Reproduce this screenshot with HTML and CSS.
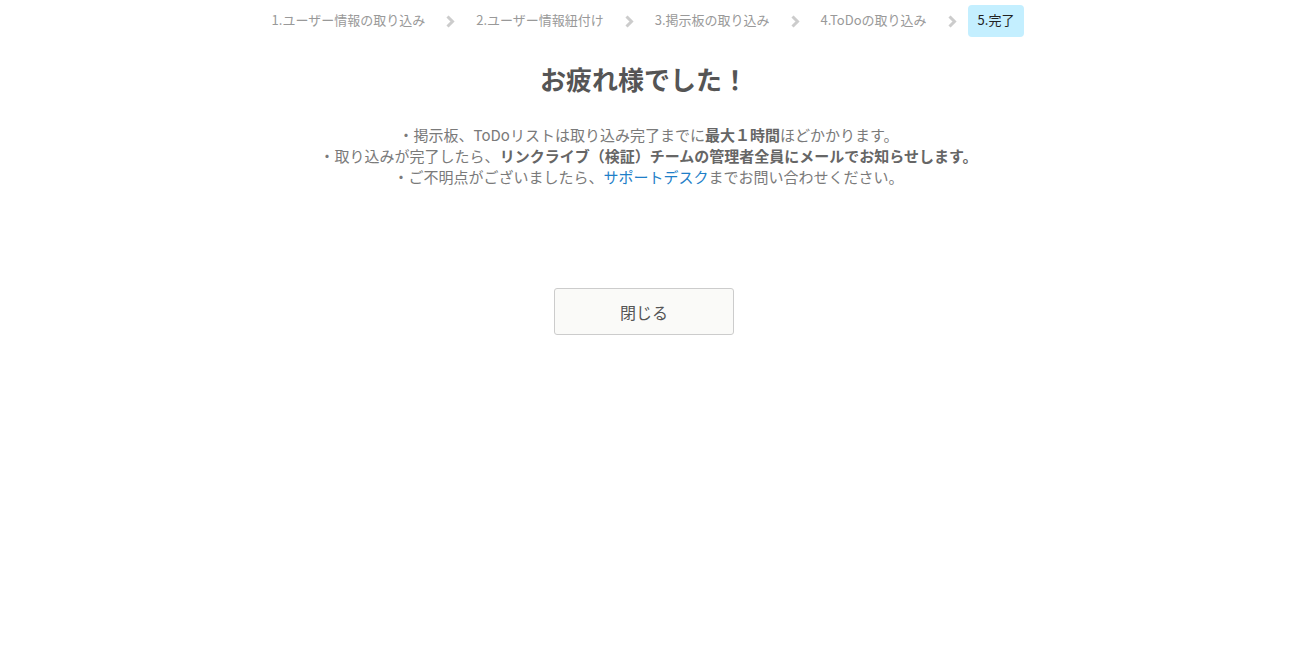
FILE: index.html
```html
<!DOCTYPE html>
<html lang="ja">
<head>
<meta charset="utf-8">
<title>完了</title>
<link rel="stylesheet" href="styles.css">
</head>
<body>
<div class="page">
  <nav class="steps">
    <span class="step">1.ユーザー情報の取り込み</span>
    <span class="sep"><svg width="9" height="13" viewBox="0 0 9 13"><path d="M1.5 1.5 L6.5 6.5 L1.5 11.5" fill="none" stroke="#cccccc" stroke-width="3"/></svg></span>
    <span class="step">2.ユーザー情報紐付け</span>
    <span class="sep"><svg width="9" height="13" viewBox="0 0 9 13"><path d="M1.5 1.5 L6.5 6.5 L1.5 11.5" fill="none" stroke="#cccccc" stroke-width="3"/></svg></span>
    <span class="step">3.掲示板の取り込み</span>
    <span class="sep"><svg width="9" height="13" viewBox="0 0 9 13"><path d="M1.5 1.5 L6.5 6.5 L1.5 11.5" fill="none" stroke="#cccccc" stroke-width="3"/></svg></span>
    <span class="step">4.ToDoの取り込み</span>
    <span class="sep"><svg width="9" height="13" viewBox="0 0 9 13"><path d="M1.5 1.5 L6.5 6.5 L1.5 11.5" fill="none" stroke="#cccccc" stroke-width="3"/></svg></span>
    <span class="step active">5.完了</span>
  </nav>
  <h1 class="title">お疲れ様でした！</h1>
  <div class="message">
    <p>・掲示板、ToDoリストは取り込み完了までに<strong>最大１時間</strong>ほどかかります。</p>
    <p>・取り込みが完了したら、<strong>リンクライブ（検証）チームの管理者全員にメールでお知らせします。</strong></p>
    <p>・ご不明点がございましたら、<a href="#" class="link">サポートデスク</a>までお問い合わせください。</p>
  </div>
  <div class="actions">
    <button class="close-btn" type="button">閉じる</button>
  </div>
</div>
</body>
</html>
```

FILE: styles.css
```css
html, body {
  margin: 0;
  padding: 0;
  background: #ffffff;
}
body {
  font-family: "Noto Sans CJK JP", "Noto Sans", sans-serif;
  color: #777777;
}
.page {
  display: flex;
  flex-direction: column;
  align-items: center;
  padding-right: 8px;
}
.steps {
  display: flex;
  align-items: center;
  justify-content: center;
  padding-top: 5px;
  margin-left: -2px;
}
.step {
  display: flex;
  align-items: center;
  height: 32px;
  padding: 0 10px 3px;
  box-sizing: border-box;
  font-size: 13px;
  color: #999999;
  border-radius: 4px;
  white-space: nowrap;
}
.step.active {
  background: #c4efff;
  color: #222222;
  padding: 0 10px 3px;
}
.sep {
  display: flex;
  align-items: center;
  margin: 0 11px;
}
.title {
  margin: 22px 0 0;
  font-size: 26px;
  line-height: 40px;
  font-weight: bold;
  color: #555555;
}
.message {
  margin-top: 25px;
  margin-left: 9px;
  text-align: center;
  font-size: 15px;
  line-height: 21px;
  color: #7a7a7a;
}
.message p {
  margin: 0;
}
.message strong {
  font-weight: bold;
  color: #666666;
}
.link {
  color: #1f7fc8;
  text-decoration: none;
}
.actions {
  margin-top: 101px;
}
.close-btn {
  width: 180px;
  height: 47px;
  background: #fafaf8;
  border: 1px solid #cccccc;
  border-radius: 3px;
  font-family: "Noto Sans CJK JP", "Noto Sans", sans-serif;
  font-size: 16px;
  color: #555555;
  cursor: pointer;
}
```
